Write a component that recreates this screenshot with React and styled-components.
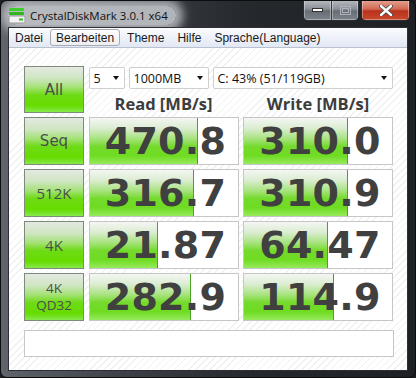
import { Fragment } from "react";
import styled, { createGlobalStyle } from "styled-components";

const GlobalStyle = createGlobalStyle`
  html, body {
    margin: 0;
    padding: 0;
    background: #1b1d20;
  }
  * {
    box-sizing: border-box;
  }
`;

const rows = [
  { label: ["Seq"], comic: true, read: "470.8", readFill: 0.736, write: "310.0", writeFill: 0.7 },
  { label: ["512K"], read: "316.7", readFill: 0.703, write: "310.9", writeFill: 0.703 },
  { label: ["4K"], read: "21.87", readFill: 0.466, write: "64.47", writeFill: 0.568 },
  { label: ["4K", "QD32"], read: "282.9", readFill: 0.689, write: "114.9", writeFill: 0.608 },
];

const menuItems = ["Datei", "Bearbeiten", "Theme", "Hilfe", "Sprache(Language)"];

const StyledWindow = styled.div`
  width: 416px;
  height: 378px;
  display: flex;
  flex-direction: column;
  border: 1px solid #0c0d0f;
  border-radius: 7px;
  overflow: hidden;
  background: linear-gradient(90deg, #60656b 0%, #3c4046 30%, #25282d 60%, #1d2024 100%);
  font-family: "Liberation Sans", Arial, sans-serif;
`;

const StyledTitleBar = styled.div`
  height: 28px;
  display: flex;
  align-items: flex-start;
  padding-left: 7px;
`;

const StyledTitle = styled.div`
  display: flex;
  align-items: center;
  gap: 4px;
  margin-top: 5px;
  padding: 1px 8px 1px 0;
  border-radius: 9px;
  background: rgba(200, 203, 207, 0.85);
  box-shadow: 0 0 10px 7px rgba(200, 203, 207, 0.8);
  font-family: "Open Sans", "Noto Sans", sans-serif;
  font-size: 11.5px;
  color: #101010;
  white-space: nowrap;
`;

const StyledCaption = styled.div`
  margin-left: auto;
  margin-right: 5px;
  margin-top: -1px;
  display: flex;
  gap: 2px;
`;

const StyledCaptionGroup = styled.div`
  display: flex;
  border: 1px solid #2a2d31;
  border-top: none;
  border-radius: 0 0 5px 5px;
  overflow: hidden;
`;

const StyledCapButton = styled.div`
  width: ${({ $w }) => $w}px;
  height: 20px;
  display: flex;
  align-items: center;
  justify-content: center;
  background: ${({ $close }) =>
    $close
      ? "linear-gradient(180deg, #e6a494 0%, #d26a55 45%, #b8321c 55%, #c94a2e 100%)"
      : "linear-gradient(180deg, #b8bcc2 0%, #8a9097 45%, #676d74 55%, #7c838a 100%)"};
  border-left: ${({ $divider }) => ($divider ? "1px solid #3a3e43" : "none")};
  box-shadow: inset 0 0 0 1px rgba(255, 255, 255, 0.35);
`;

const StyledInner = styled.div`
  flex: 1;
  display: flex;
  flex-direction: column;
  margin: 0 7px 6px 7px;
  border: 1px solid #2c3035;
`;

const StyledMenuBar = styled.div`
  height: 20px;
  display: flex;
  align-items: center;
  gap: 1px;
  padding-left: 0;
  background: linear-gradient(180deg, #fbfcfe 0%, #eef1f9 50%, #e2e8f4 100%);
  border-bottom: 1px solid #b9c0cf;
`;

const StyledMenuItem = styled.div`
  height: 17px;
  display: flex;
  align-items: center;
  padding: 0 5px;
  font-family: "Liberation Sans", Arial, sans-serif;
  font-size: 12px;
  color: #1a1a1a;
  border: 1px solid ${({ $active }) => ($active ? "#a7abb1" : "transparent")};
  border-radius: 3px;
  background: ${({ $active }) =>
    $active ? "linear-gradient(180deg, #fdfdfd 0%, #eceef1 100%)" : "transparent"};
`;

const StyledClient = styled.div`
  flex: 1;
  display: flex;
  flex-direction: column;
  padding: 18px 14px 13px 15px;
  background: repeating-linear-gradient(135deg, #ffffff 0 4px, #f1f1f1 4px 5px);
`;

const StyledGrid = styled.div`
  display: grid;
  grid-template-columns: 60px 150px 150px;
  grid-template-rows: 23px 20px repeat(4, 48px);
  justify-content: space-between;
  row-gap: 4px;
`;

const StyledTestButton = styled.div`
  grid-row: ${({ $span }) => ($span ? "1 / span 2" : "auto")};
  display: flex;
  flex-direction: column;
  align-items: center;
  justify-content: center;
  border: 1px solid #7d8b79;
  background: linear-gradient(
    180deg,
    #e4e9e2 0%,
    #cfe6c2 25%,
    #a4e276 45%,
    #6edb16 62%,
    #66dc00 85%,
    #86e84a 100%
  );
  color: #4a4f4a;
  font-family: ${({ $comic }) =>
    $comic ? '"DejaVu Sans", sans-serif' : '"Open Sans", "Noto Sans", sans-serif'};
  font-size: ${({ $small }) => ($small ? "13.5px" : "15px")};
`;

const StyledLabelLine = styled.span`
  display: block;
  height: 17px;
  line-height: 17px;
`;

const StyledControls = styled.div`
  grid-column: 2 / span 2;
  display: flex;
  gap: 4px;
  padding-top: 1px;
`;

const StyledSelect = styled.div`
  width: ${({ $w }) => $w}px;
  height: 22px;
  display: flex;
  align-items: center;
  justify-content: space-between;
  padding: 0 5px 0 4px;
  background: #ffffff;
  border: 1px solid #cfcfcf;
  border-radius: 2px;
  font-family: "Open Sans", "Noto Sans", sans-serif;
  font-size: 12.5px;
  color: #111;
  white-space: nowrap;
`;

const StyledArrow = styled.span`
  width: 0;
  height: 0;
  border-left: 3.5px solid transparent;
  border-right: 3.5px solid transparent;
  border-top: 4px solid #111;
`;

const StyledHeader = styled.div`
  display: flex;
  align-items: center;
  justify-content: center;
  font-family: "Open Sans", "Noto Sans", sans-serif;
  font-weight: 700;
  font-size: 16.5px;
  color: #3c3c3c;
  white-space: nowrap;
`;

const StyledValueBox = styled.div`
  position: relative;
  display: flex;
  align-items: center;
  justify-content: center;
  background: #ffffff;
  border: 1px solid #c6c6c6;
  overflow: hidden;
`;

const StyledBar = styled.div`
  position: absolute;
  left: 0;
  top: 0;
  bottom: 0;
  border-right: 1px solid #4aa424;
  background: linear-gradient(
    180deg,
    #f4f6f3 0%,
    #dcedd2 22%,
    #a7e37e 45%,
    #74da2c 62%,
    #6fdc22 82%,
    #96ea5c 100%
  );
`;

const StyledValue = styled.span`
  position: relative;
  padding-left: 4px;
  font-family: "DejaVu Sans", Verdana, sans-serif;
  font-weight: 700;
  font-size: 38px;
  letter-spacing: 0.3px;
  color: #404040;
`;

const StyledComment = styled.div`
  margin-top: 9px;
  height: 27px;
  width: 370px;
  background: #ffffff;
  border: 1px solid #c6c6c6;
`;

function AppIcon() {
  return (
    <svg width="18" height="17" viewBox="0 0 18 17">
      <rect x="1" y="1" width="15" height="3" rx="1" fill="#3fcf2a" />
      <rect x="1" y="5" width="15" height="3" rx="1" fill="#2fb81e" />
      <rect x="1" y="9" width="16" height="7" rx="1.5" fill="#f2f2f2" stroke="#9a9a9a" />
      <rect x="11" y="11.5" width="4" height="2" fill="#34c020" />
    </svg>
  );
}

function ValueCell({ value, fill }) {
  return (
    <StyledValueBox>
      <StyledBar style={{ width: `${fill * 100}%` }} />
      <StyledValue>{value}</StyledValue>
    </StyledValueBox>
  );
}

function App() {
  return (
    <>
      <GlobalStyle />
      <StyledWindow>
        <StyledTitleBar>
          <StyledTitle>
            <AppIcon />
            CrystalDiskMark 3.0.1 x64
          </StyledTitle>
          <StyledCaption>
            <StyledCaptionGroup>
              <StyledCapButton $w={27}>
                <svg width="11" height="4" viewBox="0 0 11 4">
                  <rect x="0.5" y="0.5" width="10" height="3" fill="#fff" stroke="#333" />
                </svg>
              </StyledCapButton>
              <StyledCapButton $w={27} $divider>
                <svg width="11" height="9" viewBox="0 0 11 9">
                  <rect x="0.5" y="0.5" width="10" height="8" fill="none" stroke="#aeb3b9" />
                  <rect x="2.5" y="2.5" width="6" height="4" fill="none" stroke="#aeb3b9" />
                </svg>
              </StyledCapButton>
            </StyledCaptionGroup>
            <StyledCaptionGroup>
              <StyledCapButton $w={47} $close>
                <svg width="14" height="11" viewBox="0 0 14 11">
                  <path
                    d="M2 1 L12 10 M12 1 L2 10"
                    stroke="#444"
                    strokeWidth="4"
                    strokeLinecap="round"
                  />
                  <path
                    d="M2 1 L12 10 M12 1 L2 10"
                    stroke="#fff"
                    strokeWidth="2.4"
                    strokeLinecap="round"
                  />
                </svg>
              </StyledCapButton>
            </StyledCaptionGroup>
          </StyledCaption>
        </StyledTitleBar>
        <StyledInner>
          <StyledMenuBar>
            {menuItems.map((item) => (
              <StyledMenuItem key={item} $active={item === "Bearbeiten"}>
                {item}
              </StyledMenuItem>
            ))}
          </StyledMenuBar>
          <StyledClient>
            <StyledGrid>
              <StyledTestButton $span $comic>
                All
              </StyledTestButton>
              <StyledControls>
                <StyledSelect $w={36}>
                  5<StyledArrow />
                </StyledSelect>
                <StyledSelect $w={80}>
                  1000MB<StyledArrow />
                </StyledSelect>
                <StyledSelect $w={180}>
                  C: 43% (51/119GB)<StyledArrow />
                </StyledSelect>
              </StyledControls>
              <StyledHeader>Read [MB/s]</StyledHeader>
              <StyledHeader>Write [MB/s]</StyledHeader>
              {rows.map((row) => (
                <Fragment key={row.read}>
                  <StyledTestButton $comic={row.comic} $small={row.label.length > 1}>
                    {row.label.map((l) => (
                      <StyledLabelLine key={l}>{l}</StyledLabelLine>
                    ))}
                  </StyledTestButton>
                  <ValueCell value={row.read} fill={row.readFill} />
                  <ValueCell value={row.write} fill={row.writeFill} />
                </Fragment>
              ))}
            </StyledGrid>
            <StyledComment />
          </StyledClient>
        </StyledInner>
      </StyledWindow>
    </>
  );
}

export default App;
